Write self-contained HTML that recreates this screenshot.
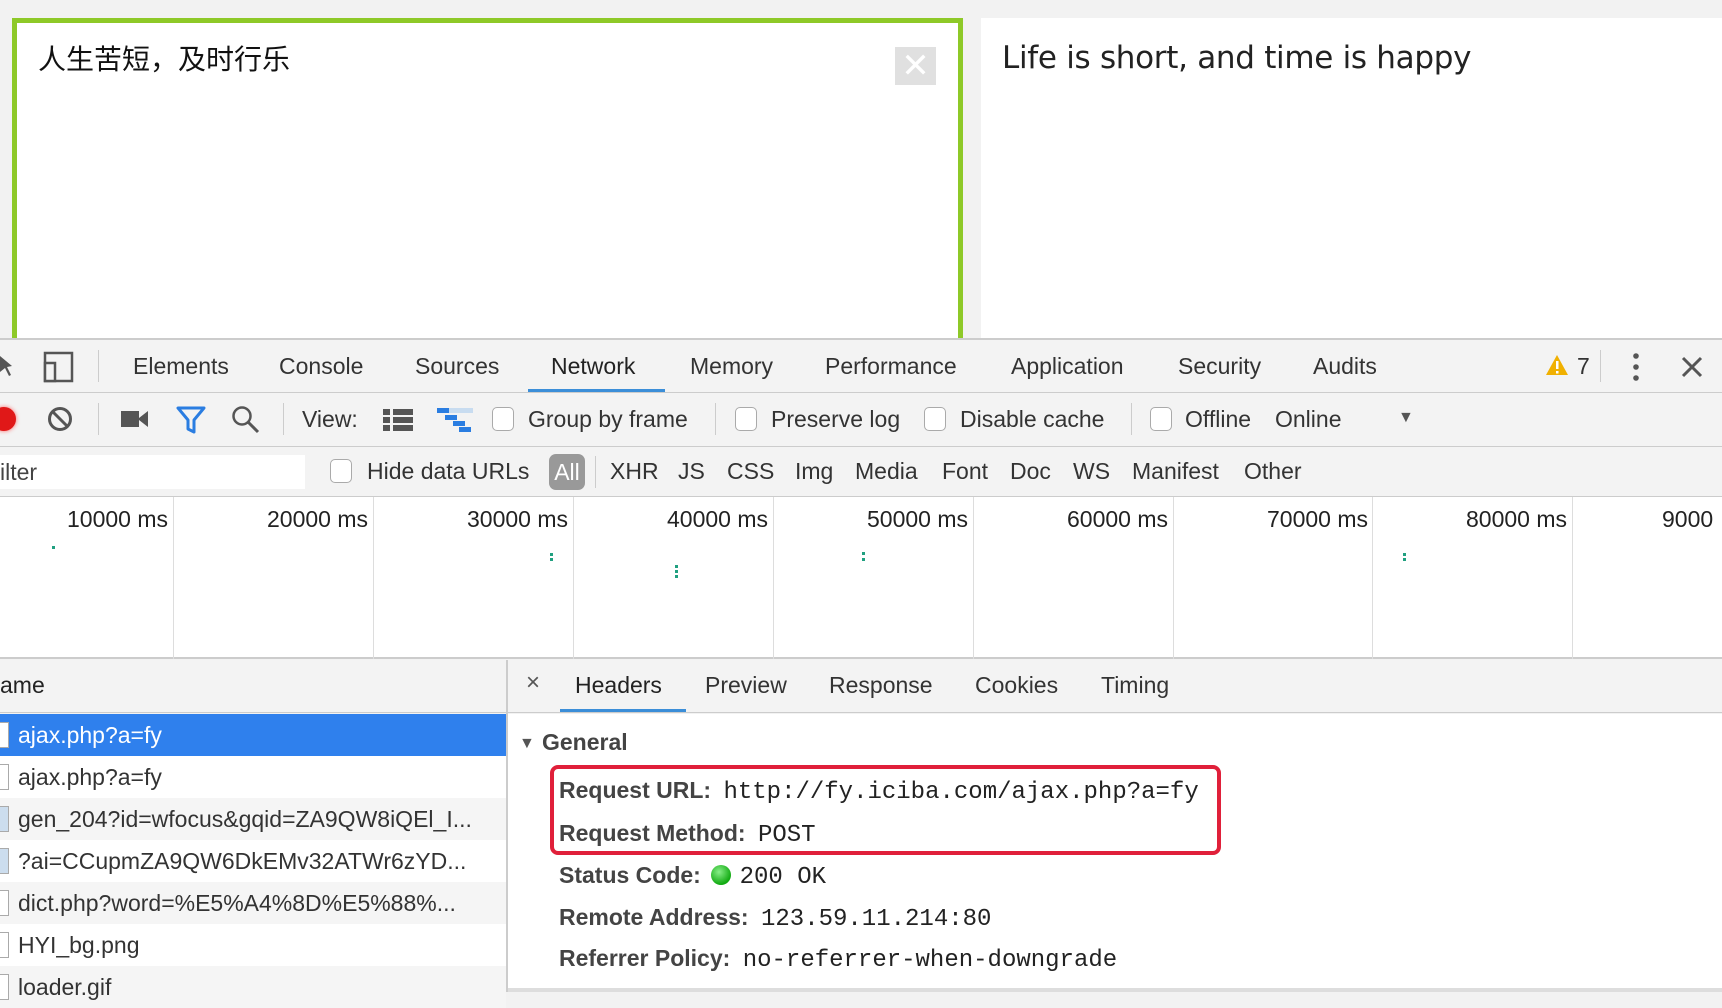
<!DOCTYPE html>
<html><head><meta charset="utf-8"><style>
*{margin:0;padding:0;box-sizing:border-box}
body{width:1722px;height:992px;overflow:hidden;background:#f2f2f2;font-family:"Liberation Sans",Arial,sans-serif;color:#333;position:relative}
.a{position:absolute;white-space:nowrap}
.t{font-size:23px;line-height:26px;color:#333}
.cb{position:absolute;width:22px;height:24px;border:1.5px solid #aaa;border-radius:5px;background:#fff}
.sep{position:absolute;width:1px;background:#ccc}
.vl{position:absolute;top:497px;height:162px;width:1px;background:#ddd}
.tl{position:absolute;top:506px;font-size:23px;text-align:right;width:190px;color:#222}
.dot{position:absolute;width:3px;height:3px;background:#20a080}
.row{position:absolute;left:0;width:506px;height:42px;font-size:23px;line-height:42px;padding-left:18px}
.ic{position:absolute;left:0;width:9px;height:26px;border:1.5px solid #aaa;border-left:none;background:#fff}
.k{font-weight:bold;color:#444}
.m{font-family:"Liberation Mono",monospace;color:#222;font-size:24px;margin-left:6px}
.hl{position:absolute;left:559px;font-size:23px;line-height:30px}
</style></head><body>
<div class="a" style="left:12px;top:18px;width:951px;height:322px;border:5px solid #8ec928;border-bottom:none;background:#fff"></div>
<div class="a" style="left:38px;top:38px;font-size:28px;font-family:'Liberation Sans','Noto Sans CJK SC',sans-serif;color:#111">人生苦短，及时行乐</div>
<div class="a" style="left:895px;top:47px;width:41px;height:38px;background:#e0e0e0;color:#fff;font-size:34px;line-height:38px;text-align:center">✕</div>
<div class="a" style="left:981px;top:18px;width:741px;height:322px;background:#fff"></div>
<div class="a" style="left:1002px;top:40px;font-size:31px;font-family:'DejaVu Sans',sans-serif;color:#222;letter-spacing:-0.3px">Life is short, and time is happy</div>
<div class="a" style="left:0;top:338px;width:1722px;height:160px;background:#f3f3f3;border-top:2px solid #ccc"></div>
<div class="a" style="left:0;top:392px;width:1722px;height:1px;background:#ccc"></div>
<div class="a" style="left:0;top:446px;width:1722px;height:1px;background:#ccc"></div>
<div class="a" style="left:0;top:496px;width:1722px;height:1px;background:#ccc"></div>
<svg class="a" style="left:0;top:350px" width="80" height="34"><path d="M0 6 L12 16 L7 17 L11 25 L9 26 L5 18 L0 22" fill="#555"/><rect x="45" y="3" width="27" height="28" fill="none" stroke="#555" stroke-width="2.5"/><rect x="45" y="13" width="10" height="18" fill="#f3f3f3" stroke="#555" stroke-width="2.5"/></svg>
<div class="sep" style="left:98px;top:350px;height:32px"></div>
<div class="a t" style="left:133px;top:353px">Elements</div>
<div class="a t" style="left:279px;top:353px">Console</div>
<div class="a t" style="left:415px;top:353px">Sources</div>
<div class="a t" style="left:551px;top:353px;color:#222">Network</div>
<div class="a" style="left:528px;top:389px;width:137px;height:3px;background:#3b8ed8"></div>
<div class="a t" style="left:690px;top:353px">Memory</div>
<div class="a t" style="left:825px;top:353px">Performance</div>
<div class="a t" style="left:1011px;top:353px">Application</div>
<div class="a t" style="left:1178px;top:353px">Security</div>
<div class="a t" style="left:1313px;top:353px">Audits</div>
<svg class="a" style="left:1545px;top:354px" width="24" height="22"><path d="M12 1 L23 21 L1 21Z" fill="#f0b000"/><rect x="11" y="7" width="2.5" height="8" fill="#fff"/><rect x="11" y="17" width="2.5" height="2.5" fill="#fff"/></svg>
<div class="a t" style="left:1577px;top:353px">7</div>
<div class="sep" style="left:1600px;top:350px;height:32px"></div>
<svg class="a" style="left:1630px;top:352px" width="12" height="30"><circle cx="6" cy="4" r="2.8" fill="#555"/><circle cx="6" cy="15" r="2.8" fill="#555"/><circle cx="6" cy="26" r="2.8" fill="#555"/></svg>
<svg class="a" style="left:1681px;top:356px" width="22" height="22"><path d="M2 2L20 20M20 2L2 20" stroke="#555" stroke-width="3"/></svg>
<div class="a" style="left:-8px;top:407px;width:24px;height:24px;border-radius:50%;background:#e01818;box-shadow:0 0 4px #f66"></div>
<svg class="a" style="left:47px;top:406px" width="26" height="26"><circle cx="13" cy="13" r="10.5" fill="none" stroke="#555" stroke-width="3"/><path d="M6 6L20 20" stroke="#555" stroke-width="3"/></svg>
<div class="sep" style="left:98px;top:403px;height:32px"></div>
<svg class="a" style="left:121px;top:409px" width="28" height="20"><rect x="0" y="2" width="18" height="16" fill="#555"/><path d="M18 9L27 2V18L18 11Z" fill="#555"/></svg>
<svg class="a" style="left:176px;top:405px" width="30" height="30"><path d="M2 3H28L18 15V27L12 24V15Z" fill="none" stroke="#2a7de1" stroke-width="3" stroke-linejoin="round"/></svg>
<svg class="a" style="left:231px;top:405px" width="30" height="30"><circle cx="11" cy="11" r="8.5" fill="none" stroke="#555" stroke-width="2.5"/><path d="M17 17L27 27" stroke="#555" stroke-width="3"/></svg>
<div class="sep" style="left:283px;top:403px;height:32px"></div>
<div class="a t" style="left:302px;top:406px">View:</div>
<svg class="a" style="left:383px;top:408px" width="30" height="24"><rect x="0" y="1" width="7" height="6" fill="#555"/><rect x="10" y="1" width="20" height="6" fill="#555"/><rect x="0" y="9" width="7" height="6" fill="#555"/><rect x="10" y="9" width="20" height="6" fill="#555"/><rect x="0" y="17" width="7" height="6" fill="#555"/><rect x="10" y="17" width="20" height="6" fill="#555"/></svg>
<svg class="a" style="left:437px;top:408px" width="36" height="24"><rect x="0" y="0" width="36" height="5" fill="#c8dcf0"/><rect x="0" y="0" width="12" height="5" fill="#2a7de1"/><rect x="8" y="7" width="12" height="5" fill="#2a7de1"/><rect x="16" y="13" width="12" height="5" fill="#2a7de1"/><rect x="22" y="19" width="12" height="5" fill="#2a7de1"/></svg>
<div class="cb" style="left:492px;top:407px"></div>
<div class="a t" style="left:528px;top:406px">Group by frame</div>
<div class="sep" style="left:715px;top:403px;height:32px"></div>
<div class="cb" style="left:735px;top:407px"></div>
<div class="a t" style="left:771px;top:406px">Preserve log</div>
<div class="cb" style="left:924px;top:407px"></div>
<div class="a t" style="left:960px;top:406px">Disable cache</div>
<div class="sep" style="left:1131px;top:403px;height:32px"></div>
<div class="cb" style="left:1150px;top:407px"></div>
<div class="a t" style="left:1185px;top:406px">Offline</div>
<div class="a t" style="left:1275px;top:406px">Online</div>
<div class="a" style="left:1398px;top:409px;font-size:16px;color:#555">▼</div>
<div class="a" style="left:0;top:455px;width:305px;height:34px;background:#fff"></div>
<div class="a t" style="left:0;top:459px;color:#444">ilter</div>
<div class="cb" style="left:330px;top:459px"></div>
<div class="a t" style="left:367px;top:458px">Hide data URLs</div>
<div class="a" style="left:549px;top:454px;width:36px;height:36px;border-radius:7px;background:#999;color:#fff;font-size:23px;line-height:36px;text-align:center">All</div>
<div class="sep" style="left:595px;top:456px;height:32px"></div>
<div class="a t" style="left:610px;top:458px">XHR</div>
<div class="a t" style="left:678px;top:458px">JS</div>
<div class="a t" style="left:727px;top:458px">CSS</div>
<div class="a t" style="left:795px;top:458px">Img</div>
<div class="a t" style="left:855px;top:458px">Media</div>
<div class="a t" style="left:942px;top:458px">Font</div>
<div class="a t" style="left:1010px;top:458px">Doc</div>
<div class="a t" style="left:1073px;top:458px">WS</div>
<div class="a t" style="left:1132px;top:458px">Manifest</div>
<div class="a t" style="left:1244px;top:458px">Other</div>
<div class="a" style="left:0;top:497px;width:1722px;height:162px;background:#fff;border-bottom:2px solid #ccc"></div>
<div class="vl" style="left:173px"></div><div class="vl" style="left:373px"></div><div class="vl" style="left:573px"></div><div class="vl" style="left:773px"></div><div class="vl" style="left:973px"></div><div class="vl" style="left:1173px"></div><div class="vl" style="left:1372px"></div><div class="vl" style="left:1572px"></div>
<div class="tl" style="left:-22px">10000 ms</div>
<div class="tl" style="left:178px">20000 ms</div>
<div class="tl" style="left:378px">30000 ms</div>
<div class="tl" style="left:578px">40000 ms</div>
<div class="tl" style="left:778px">50000 ms</div>
<div class="tl" style="left:978px">60000 ms</div>
<div class="tl" style="left:1178px">70000 ms</div>
<div class="tl" style="left:1377px">80000 ms</div>
<div class="a" style="left:1662px;top:506px;font-size:23px;color:#222">9000</div>
<div class="dot" style="left:52px;top:546px"></div>
<div class="dot" style="left:550px;top:553px"></div><div class="dot" style="left:550px;top:558px"></div>
<div class="dot" style="left:675px;top:565px"></div><div class="dot" style="left:675px;top:570px"></div><div class="dot" style="left:675px;top:575px"></div>
<div class="dot" style="left:862px;top:552px"></div><div class="dot" style="left:862px;top:558px"></div>
<div class="dot" style="left:1403px;top:553px"></div><div class="dot" style="left:1403px;top:558px"></div>
<div class="a" style="left:0;top:660px;width:1722px;height:53px;background:#f3f3f3;border-bottom:1px solid #ccc"></div>
<div class="a" style="left:506px;top:660px;width:2px;height:332px;background:#ccc"></div>
<div class="a t" style="left:0;top:672px;color:#222">ame</div>
<div class="a" style="left:526px;top:669px;font-size:24px;color:#555">×</div>
<div class="a t" style="left:575px;top:672px;color:#222">Headers</div>
<div class="a" style="left:560px;top:709px;width:126px;height:3px;background:#3b8ed8"></div>
<div class="a t" style="left:705px;top:672px">Preview</div>
<div class="a t" style="left:829px;top:672px">Response</div>
<div class="a t" style="left:975px;top:672px">Cookies</div>
<div class="a t" style="left:1101px;top:672px">Timing</div>
<div class="a" style="left:0;top:714px;width:506px;height:278px;background:#fff"></div>
<div class="row" style="top:714px;background:#2f80ed;color:#fff">ajax.php?a=fy</div><div class="ic" style="top:722px"></div>
<div class="row" style="top:756px">ajax.php?a=fy</div><div class="ic" style="top:764px"></div>
<div class="row" style="top:798px;background:#f5f5f5">gen_204?id=wfocus&amp;gqid=ZA9QW8iQEl_I...</div><div class="ic" style="top:806px;background:#cde"></div>
<div class="row" style="top:840px">?ai=CCupmZA9QW6DkEMv32ATWr6zYD...</div><div class="ic" style="top:848px;background:#cde"></div>
<div class="row" style="top:882px;background:#f5f5f5">dict.php?word=%E5%A4%8D%E5%88%...</div><div class="ic" style="top:890px"></div>
<div class="row" style="top:924px">HYI_bg.png</div><div class="ic" style="top:932px"></div>
<div class="row" style="top:966px;background:#f5f5f5">loader.gif</div><div class="ic" style="top:974px"></div>
<div class="a" style="left:508px;top:714px;width:1214px;height:278px;background:#fff"></div>
<div class="a" style="left:519px;top:735px;font-size:16px;color:#555">▼</div>
<div class="a k" style="left:542px;top:729px;font-size:23px">General</div>
<div class="a" style="left:550px;top:765px;width:671px;height:90px;border:4px solid #e0203a;border-radius:8px"></div>
<div class="hl" style="top:775px"><span class="k">Request URL:</span> <span class="m">http://fy.iciba.com/ajax.php?a=fy</span></div>
<div class="hl" style="top:818px"><span class="k">Request Method:</span> <span class="m">POST</span></div>
<div class="hl" style="top:860px"><span class="k">Status Code:</span> <span style="display:inline-block;width:20px;height:20px;border-radius:50%;background:radial-gradient(circle at 40% 35%,#8e8,#1a1 70%);vertical-align:-2px;margin-left:4px"></span> <span class="m" style="margin-left:2px">200 OK</span></div>
<div class="hl" style="top:902px"><span class="k">Remote Address:</span> <span class="m">123.59.11.214:80</span></div>
<div class="hl" style="top:943px"><span class="k">Referrer Policy:</span> <span class="m">no-referrer-when-downgrade</span></div>
<div class="a" style="left:508px;top:988px;width:1214px;height:4px;background:#ddd"></div>
</body></html>
